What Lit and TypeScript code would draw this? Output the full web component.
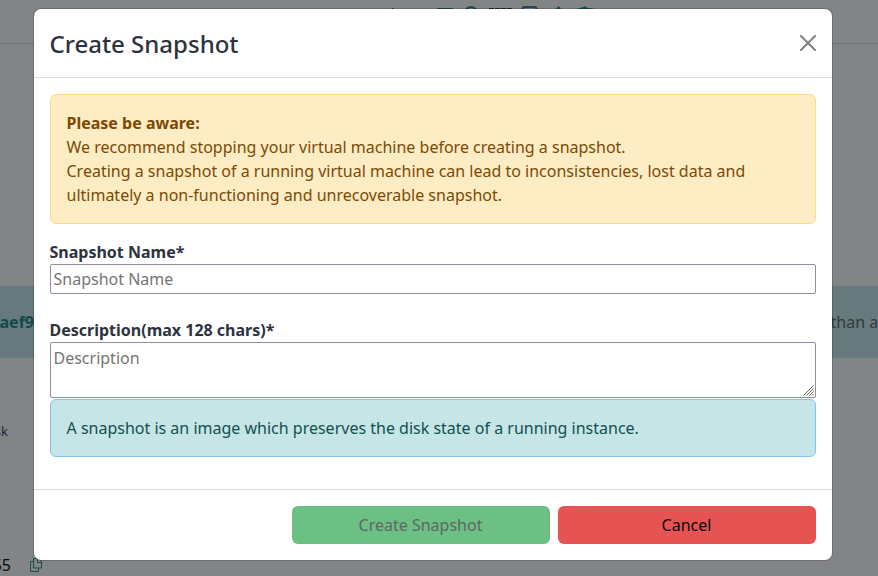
import { LitElement, html, css } from "lit";
import { customElement } from "lit/decorators.js";

@customElement("page-behind")
class PageBehind extends LitElement {
  static styles = css`
    :host { display: flex; flex-direction: column; height: 576px; background: #838486; color: #191c21; overflow: hidden; }
    .toolbar { height: 43px; flex: none; border-bottom: 1px solid #707274; display: flex; justify-content: center; box-sizing: content-box; }
    .toolbar svg { flex: none; width: 240px; height: 12px; margin-left: 102px; }
    .band { margin-top: 242px; height: 72px; flex: none; background: #667a7d; display: flex; align-items: center; justify-content: space-between; white-space: nowrap; line-height: 24px; }
    .band b { width: 34px; color: #12494b; display: flex; justify-content: flex-end; }
    .band span { width: 47.5px; color: #303a3d; }
    .cell { margin-top: 63px; width: 8px; height: 20px; line-height: 20px; font-size: 13px; color: #22213a; display: flex; justify-content: flex-end; }
    .size { margin-top: 112px; height: 24px; line-height: 24px; display: flex; align-items: center; color: #08090b; }
    .num { width: 11px; display: flex; justify-content: flex-end; }
    .size svg { margin-left: 19px; width: 12px; height: 14px; }
  `;
  render() {
    return html`
      <div class="toolbar">
        <svg viewBox="0 0 240 12" fill="none" stroke="#164d50" stroke-width="1.5">
          <path d="M22.500 8v2" stroke="#202326" />
          <path d="M67 8.800h16" />
          <circle cx="101" cy="13.500" r="6.500" stroke-width="1.800" />
          <path d="M119 8.700h24" stroke="#202a2c" stroke-dasharray="5 1" />
          <rect x="152.500" y="7" width="14" height="12" rx="2" stroke-width="2" />
          <path d="m185 10 3.500-4 3.500 4z" fill="#164d50" stroke="none" />
          <path d="m207 9 9-3v1.500l9 1.500z" fill="#164d50" stroke="none" />
        </svg>
      </div>
      <div class="band"><b>aef9</b><span>than a</span></div>
      <div class="cell">sk</div>
      <div class="size">
        <span class="num">55</span>
        <svg viewBox="0 0 12 14" fill="none" stroke="#1f4b4d">
          <path d="M3.500.5h5l3 3v6.500h-8zM7.500.5v4h4M3.500 3.500h-3v10h8V10" />
        </svg>
      </div>
    `;
  }
}

@customElement("app-root")
class AppRoot extends LitElement {
  static styles = css`
    :host { display: block; position: relative; width: 878px; height: 576px; overflow: hidden; font: 16px/24px "Noto Sans", sans-serif; color: #2c333f; }
    * { box-sizing: border-box; }
    .modal { position: absolute; left: 32.5px; top: 8px; width: 800px; background: #fff; background-clip: padding-box; border: 1px solid rgba(0, 0, 0, 0.18); border-radius: 8px; }
    header { display: flex; justify-content: space-between; align-items: center; padding: 17px 16px 15px; height: 69px; border-bottom: 1px solid #dbdde1; }
    h1 { margin: 0; font-size: 24px; line-height: 36px; font-weight: 500; }
    .close { width: 16px; height: 16px; display: block; }
    header button { border: 0; padding: 0; background: none; margin: 0 0 2px; }
    .body { padding: 16px; height: 411px; display: flex; flex-direction: column; }
    .alert { padding: 16px; border: 1px solid; border-radius: 6px; }
    .warn { background: #feecc5; border-color: #fddb8b; color: #7c4a03; margin-bottom: 16px; }
    .info { background: #c5e5e6; border-color: #7dc3f8; color: #14504f; margin-top: 1px; }
    label { font-weight: 700; }
    input, textarea { display: block; width: 100%; margin: 0; font: inherit; color: inherit; background: #fff; border: 1px solid #8f8f9d; border-radius: 2px; padding: 2px 3px; }
    input { height: 30px; margin-bottom: 24px; }
    .area { position: relative; }
    .grip { position: absolute; right: 2px; bottom: 2px; width: 11px; height: 11px; pointer-events: none; }
    textarea { height: 56px; padding: 3px; resize: none; }
    ::placeholder { color: #757575; opacity: 1; }
    footer { border-top: 1px solid #dbdde1; padding: 16px; display: flex; justify-content: flex-end; gap: 8px; }
    .btn { width: 258px; height: 38px; border: 0; border-radius: 6px; font: inherit; padding: 0; }
    .create { background: #6cc083; color: #5f6763; }
    .cancel { background: #e55353; color: #080a0c; }
  `;
  render() {
    return html`
      <page-behind></page-behind>
      <section class="modal" role="dialog">
        <header>
          <h1>Create Snapshot</h1>
          <button aria-label="Close">
            <svg class="close" viewBox="0 0 16 16" stroke="#808080" stroke-width="2" stroke-linecap="round"><path d="m1 1 14 14M15 1 1 15" /></svg>
          </button>
        </header>
        <div class="body">
          <div class="alert warn">
            <b>Please be aware:</b><br />We recommend stopping your virtual machine before creating a snapshot.<br />Creating a snapshot of a running virtual machine can lead to inconsistencies, lost data and ultimately a non-functioning and unrecoverable snapshot.
          </div>
          <label for="name">Snapshot Name*</label>
          <input id="name" placeholder="Snapshot Name" />
          <label for="description">Description(max 128 chars)*</label>
          <div class="area">
            <textarea id="description" placeholder="Description"></textarea>
            <svg class="grip" viewBox="0 0 11 11" stroke="#666" stroke-width="1"><path d="M.5 10.500l10-10M3.500 10.500l7-7M6.500 10.500l4-4M9 10.500l1.500-1.500" /></svg>
          </div>
          <div class="alert info">A snapshot is an image which preserves the disk state of a running instance.</div>
        </div>
        <footer>
          <button class="btn create" disabled>Create Snapshot</button>
          <button class="btn cancel">Cancel</button>
        </footer>
      </section>
    `;
  }
}
